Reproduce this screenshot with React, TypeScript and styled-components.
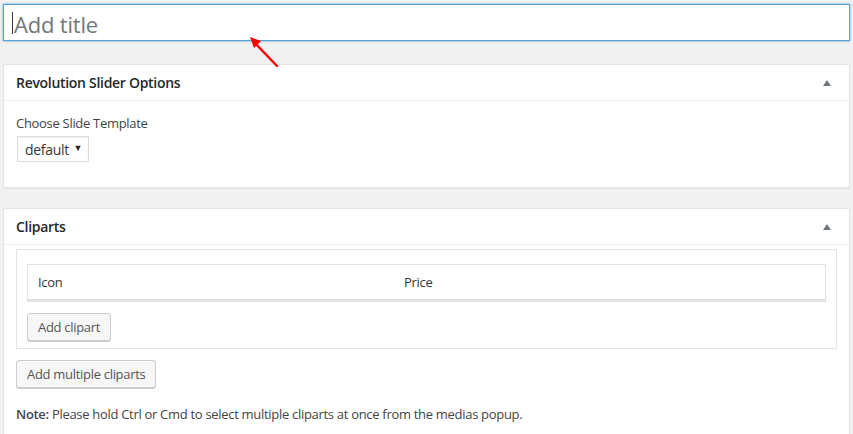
import styled, { createGlobalStyle } from "styled-components";

const GlobalStyle = createGlobalStyle`
    html, body {
        margin: 0;
        padding: 0;
        background: #f1f1f1;
        font-family: "Open Sans", "Noto Sans", sans-serif;
        font-size: 13px;
        letter-spacing: -0.3px;
        color: #444;
    }
    * {
        box-sizing: border-box;
    }
`;

export default function App() {
    return <Page>
        <GlobalStyle />
        <TitleWrap>
            <TitleInput>
                <Caret />
                <Placeholder>Add title</Placeholder>
            </TitleInput>
            <Pointer width="40" height="40" viewBox="0 0 40 40">
                <line x1="31" y1="33" x2="8" y2="9" stroke="#f00" strokeWidth="2.4" strokeLinecap="round" />
                <polygon points="4,4 15,8 8,15" fill="#f00" />
            </Pointer>
        </TitleWrap>

        <Postbox>
            <BoxHeader>
                <BoxTitle>Revolution Slider Options</BoxTitle>
                <Toggle />
            </BoxHeader>
            <BoxBody $pad="13px 12px 25px">
                <Label>Choose Slide Template</Label>
                <Select>
                    default
                    <Caret2>▼</Caret2>
                </Select>
            </BoxBody>
        </Postbox>

        <Postbox>
            <BoxHeader>
                <BoxTitle>Cliparts</BoxTitle>
                <Toggle />
            </BoxHeader>
            <BoxBody $pad="4px 12px 12px">
                <Repeater>
                    <TableHead>
                        <HeadCell>Icon</HeadCell>
                        <HeadCell>Price</HeadCell>
                    </TableHead>
                    <Button>Add clipart</Button>
                </Repeater>
                <Button $top={11}>Add multiple cliparts</Button>
                <Note><strong>Note:</strong> Please hold Ctrl or Cmd to select multiple cliparts at once from the medias popup.</Note>
            </BoxBody>
        </Postbox>
    </Page>
}

const Page = styled.div`
    padding: 4px 3px 0;
    display: flex;
    flex-direction: column;
    gap: 22px;
    height: 434px;
    overflow: hidden;
`

const TitleWrap = styled.div`
    position: relative;
    margin-bottom: 1px;
`

const TitleInput = styled.div`
    height: 37px;
    background: #fff;
    border: 1px solid #5b9dd9;
    box-shadow: 0 0 2px rgba(30, 140, 190, 0.8);
    display: flex;
    align-items: center;
    padding: 0 8px;
    gap: 1px;
`

const Caret = styled.span`
    width: 1px;
    height: 22px;
    background: #32373c;
`

const Placeholder = styled.span`
    font-size: 22px;
    letter-spacing: -0.2px;
    color: #72777c;
    line-height: 1;
    margin-top: 2px;
`

const Pointer = styled.svg`
    position: absolute;
    left: 243px;
    top: 29px;
`

const Postbox = styled.div`
    background: #fff;
    border: 1px solid #e5e5e5;
    box-shadow: 0 1px 1px rgba(0, 0, 0, 0.04);
    margin-bottom: -2px;
`

const BoxHeader = styled.div`
    height: 36px;
    border-bottom: 1px solid #eee;
    display: flex;
    align-items: center;
    justify-content: space-between;
    padding: 0 18px 0 12px;
`

const BoxTitle = styled.h2`
    margin: 0;
    font-size: 14px;
    font-weight: 600;
    color: #23282d;
`

const Toggle = styled.span`
    width: 0;
    height: 0;
    border-left: 4px solid transparent;
    border-right: 4px solid transparent;
    border-bottom: 6px solid #72777c;
`

const BoxBody = styled.div<{ $pad: string }>`
    padding: ${p => p.$pad};
`

const Label = styled.div`
    color: #444;
    line-height: 18px;
    margin-bottom: 4px;
`

const Select = styled.div`
    display: inline-flex;
    align-items: center;
    justify-content: space-between;
    width: 72px;
    height: 26px;
    margin-left: 1px;
    padding: 0 6px 0 7px;
    border: 1px solid #ddd;
    box-shadow: inset 0 1px 2px rgba(0, 0, 0, 0.07);
    color: #32373c;
    font-size: 14px;
`

const Caret2 = styled.span`
    font-size: 9px;
    color: #23282d;
    margin-top: -3px;
`

const Repeater = styled.div`
    border: 1px solid #e5e5e5;
    padding: 14px 10px 7px;
`

const TableHead = styled.div`
    display: grid;
    grid-template-columns: 366px 1fr;
    height: 36px;
    align-items: center;
    border: 1px solid #e1e1e1;
    box-shadow: 0 2px 0 #e1e1e1;
    padding: 0 10px;
    color: #32373c;
    margin-bottom: 13px;
`

const HeadCell = styled.div`
    font-size: 13px;
`

const Button = styled.button<{ $top?: number }>`
    display: block;
    height: 28px;
    margin-top: ${p => p.$top ?? 0}px;
    padding: 0 10px 1px;
    background: #f7f7f7;
    border: 1px solid #ccc;
    border-radius: 3px;
    box-shadow: 0 1px 0 #ccc;
    color: #555;
    font-family: inherit;
    font-size: 13px;
    letter-spacing: inherit;
`

const Note = styled.p`
    margin: 17px 0 0;
    color: #444;
    font-size: 13px;

    strong {
        font-weight: 600;
        color: #444;
    }
`
